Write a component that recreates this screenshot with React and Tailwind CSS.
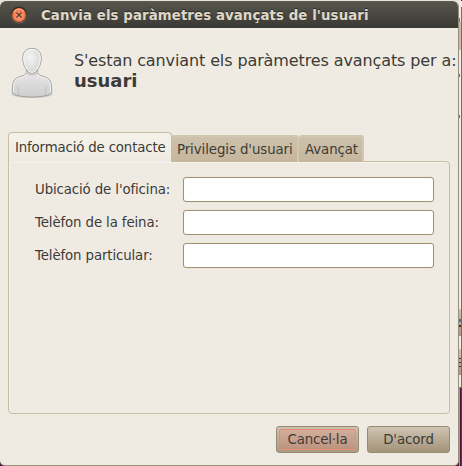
import React from "react";

function CloseButton() {
  return (
    <svg width="18" height="18" viewBox="0 0 18 18" className="shrink-0">
      <defs>
        <radialGradient id="orb" cx="50%" cy="55%" r="55%">
          <stop offset="0" stopColor="#f8a580" />
          <stop offset="0.6" stopColor="#f3855a" />
          <stop offset="1" stopColor="#e9602f" />
        </radialGradient>
        <linearGradient id="ring" x1="0" y1="0" x2="0" y2="1">
          <stop offset="0" stopColor="#292823" />
          <stop offset="1" stopColor="#6b6963" />
        </linearGradient>
      </defs>
      <circle cx="9" cy="9" r="8.6" fill="url(#ring)" />
      <circle cx="9" cy="9" r="7.4" fill="#4a2a1c" />
      <circle cx="9" cy="9" r="6.9" fill="url(#orb)" />
      <path d="M4 6 A5.8 5.8 0 0 1 14 6" stroke="#fcc3a6" strokeWidth="1" fill="none" />
      <path d="M6.5 6.5 L11.5 11.5 M11.5 6.5 L6.5 11.5" stroke="#5f3a2a" strokeWidth="1.3" />
    </svg>
  );
}

function Avatar() {
  return (
    <svg width="48" height="56" viewBox="0 0 48 56" className="shrink-0">
      <defs>
        <radialGradient id="head" cx="40%" cy="35%" r="70%">
          <stop offset="0" stopColor="#f4f4f4" />
          <stop offset="1" stopColor="#d3d3d3" />
        </radialGradient>
        <linearGradient id="body" x1="0" y1="0" x2="0" y2="1">
          <stop offset="0" stopColor="#ececec" />
          <stop offset="0.55" stopColor="#d9d9d9" />
          <stop offset="1" stopColor="#cfcfcf" />
        </linearGradient>
        <radialGradient id="shade">
          <stop offset="0.6" stopColor="#8d8a84" stopOpacity="0.6" />
          <stop offset="1" stopColor="#8d8a84" stopOpacity="0" />
        </radialGradient>
      </defs>
      <ellipse cx="24" cy="50.5" rx="22" ry="4" fill="url(#shade)" />
      <path
        d="M18.5 26 C18.5 30 17.5 31 14 32 C7 34 4.9 36 4.5 43 L4.3 49 C4.5 51 14 53 24 53 C34 53 43.5 51 43.7 49 L43.5 43 C43.1 36 41 34 34 32 C30.5 31 29.5 30 29.5 26 Z"
        fill="url(#body)" stroke="#a1a1a1"
      />
      <path
        d="M18.6 30.5 C17 32.8 14 33 11 34.2 C7 35.7 5.9 38 5.6 43 L5.4 48 M29.4 30.5 C31 32.8 34 33 37 34.2 C41 35.7 42.1 38 42.4 43 L42.6 48"
        fill="none" stroke="#f5f5f5"
      />
      <path d="M10.5 51 C10.5 47 10.3 44.5 9.5 42 M37.5 51 C37.5 47 37.7 44.5 38.5 42" fill="none" stroke="#bdbdbd" />
      <path d="M19 28 C20.5 31.5 27.5 31.5 29 28" fill="none" stroke="#cdcdcd" strokeWidth="2" />
      <path
        d="M24 4.3 C30 4.3 33.3 8.5 33.3 14.5 C33.3 21.5 28.5 29.5 24 29.5 C19.5 29.5 14.7 21.5 14.7 14.5 C14.7 8.5 18 4.3 24 4.3 Z"
        fill="url(#head)" stroke="#a6a6a6"
      />
      <path
        d="M24 5.4 C29.3 5.4 32.2 9 32.2 14.5 C32.2 21 27.9 28.4 24 28.4 C20.1 28.4 15.8 21 15.8 14.5 C15.8 9 18.7 5.4 24 5.4 Z"
        fill="none" stroke="#fafafa"
      />
    </svg>
  );
}

const fields = ["Ubicació de l'oficina:", "Telèfon de la feina:", "Telèfon particular:"];

function Field({ label }) {
  return (
    <label className="flex h-[25px] items-center">
      <span className="w-[148px] tracking-[-0.12px] whitespace-nowrap">{label}</span>
      <input
        type="text"
        className="h-[25px] w-[251px] rounded-[3px] border border-[#9f9077] bg-white px-1 shadow-[0_0_0_1px_#ece8d9] outline-none"
      />
    </label>
  );
}

function Tabs() {
  return (
    <div className="flex h-[30px] items-end pr-3">
      <div className="relative z-10 h-[30px] w-[164px] rounded-t-[4px] border border-b-0 border-[#cabda4] bg-linear-to-b from-[#f5f2e9] to-[#efebe3] pl-[6px] pt-[6px] leading-[18px] tracking-[-0.16px] whitespace-nowrap">
        Informació de contacte
      </div>
      <div className="-ml-px h-[27px] w-[128px] rounded-t-[3px] border-2 border-b-0 border-l-0 border-[#d2c7b3] bg-linear-to-b from-[#cec2ac] to-[#c5b69c] pl-[6px] pt-[4px] leading-[18px] tracking-[-0.08px] whitespace-nowrap">
        Privilegis d'usuari
      </div>
      <div className="h-[27px] w-[65px] rounded-t-[3px] border-2 border-b-0 border-l-0 border-[#d2c7b3] bg-linear-to-b from-[#cec2ac] to-[#c5b69c] pl-[6px] pt-[4px] leading-[18px] tracking-[-0.08px] whitespace-nowrap">
        Avançat
      </div>
    </div>
  );
}

function Desktop() {
  return (
    <div className="flex h-[466px] w-[3px] shrink-0">
      <div className="flex w-[2px] flex-col bg-[#f0ece4]">
        <div className="mt-[18px] h-1 w-px bg-[#60739d]" />
        <div className="h-[28px] bg-[#c4baa9]" />
        <div className="mt-[24px] h-[3px] w-px bg-[#60739d]" />
        <div className="mt-[38px] h-[3px] w-px bg-[#60739d]" />
        <div className="mt-[191px] flex h-[27px] flex-col justify-center gap-[3px] bg-linear-to-b from-[#cec3b0] to-[#a69780]">
          <div className="h-[3px] bg-[#4b7387]" />
          <div className="h-[2px] bg-[#3c3b37]" />
        </div>
        <div className="mt-[13px] flex h-[26px] flex-col justify-center gap-[3px] bg-linear-to-b from-[#cec3b0] to-[#a69780]">
          <div className="h-px bg-[#3c3b37]" />
          <div className="h-px bg-[#3c3b37]" />
          <div className="h-px bg-[#3c3b37]" />
        </div>
        <div className="mt-[12px] h-px bg-[#7d6f5a]" />
        <div className="flex flex-1">
          <div className="w-px bg-[#c9838c]" />
          <div className="w-px bg-[#4d173d]" />
        </div>
      </div>
      <div className="flex w-px flex-col">
        <div className="h-px bg-[#201f1c]" />
        <div className="h-[6px] bg-[#f0ece4]" />
        <div className="h-[381px] bg-[#77705f]" />
        <div className="flex-1 bg-[#65304f]" />
      </div>
    </div>
  );
}

export default function App() {
  return (
    <div className="flex h-[466px] w-[462px] overflow-hidden bg-[#e8e3da] font-['DejaVu_Sans',sans-serif] text-[13.333px] text-[#3c3b37]">
      <div className="flex w-[459px] shrink-0 flex-col bg-[linear-gradient(to_bottom,#e8e3da_0_430px,#491a38_430px_455px,#491a38)] pt-px">
        <div className="flex h-[465px] flex-col overflow-hidden rounded-t-[6px] rounded-b-[5px] border-r border-b border-[#9a8e79] bg-[#efebe3]">
          <header className="-mr-px flex h-[27px] shrink-0 items-center rounded-tr-[6px] border-t border-[#5c5b53] bg-linear-to-b from-[#56554d] to-[#3a3935] pl-[10px]">
            <CloseButton />
            <h1 className="pt-px pl-[13px] text-[13.333px] leading-[20px] font-bold tracking-[0.09px] whitespace-nowrap text-[#dfd8c8] [text-shadow:0_-1px_0_#2b2a26]">
              Canvia els paràmetres avançats de l'usuari
            </h1>
          </header>

          <section className="flex h-[104px] shrink-0 pt-[16px] pl-2">
            <Avatar />
            <div className="pt-[7px] pl-[18px] whitespace-nowrap">
              <p className="text-[16px] leading-[20px] tracking-[-0.11px]">S'estan canviant els paràmetres avançats per a:</p>
              <p className="text-[18px] leading-[20px] font-bold">usuari</p>
            </div>
          </section>

          <section className="pl-2">
            <Tabs />
            <div className="-mt-px flex h-[253px] w-[442px] flex-col gap-2 rounded-[4px] rounded-tl-none border border-[#cabda4] pt-[15px] pl-[26px] shadow-[inset_1px_1px_0_#f5f2ec]">
              {fields.map((f) => (
                <Field key={f} label={f} />
              ))}
            </div>
          </section>

          <footer className="flex justify-end gap-2 pt-[12px] pr-2">
            <button className="flex h-[27px] w-[83px] rounded-[3px] border border-[#978a75] bg-linear-to-b from-[#cdc2b0] to-[#aa9c85] p-[2px]">
              <span className="flex h-full w-full items-center justify-center rounded-[2px] border border-[#e78b71] bg-linear-to-b from-[#d4ac9c] to-[#bd947d] tracking-[-0.15px]">
                Cancel·la
              </span>
            </button>
            <button className="flex h-[27px] w-[83px] items-center justify-center rounded-[3px] border border-[#978a75] bg-linear-to-b from-[#cfc4b3] to-[#a39379] tracking-[-0.08px]">
              D'acord
            </button>
          </footer>
        </div>
      </div>
      <Desktop />
    </div>
  );
}
